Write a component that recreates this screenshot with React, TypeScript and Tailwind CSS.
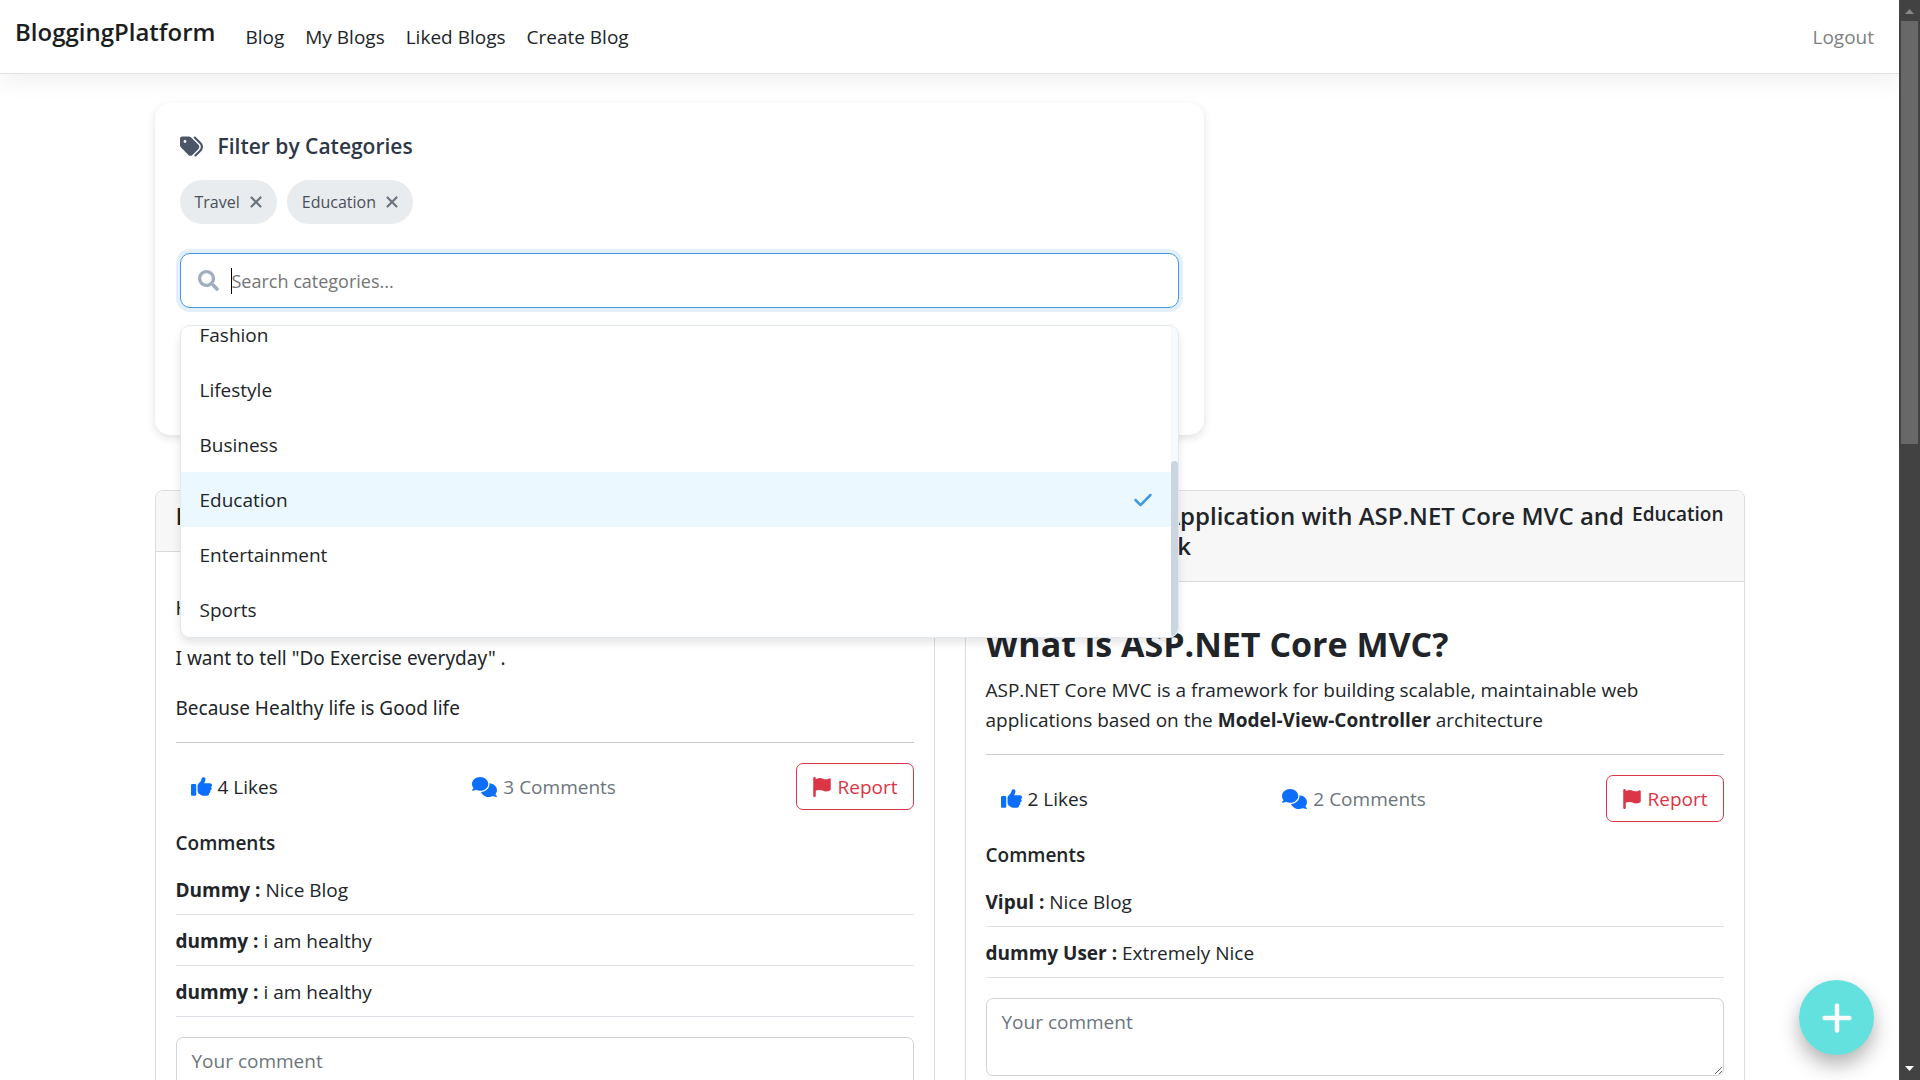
import type { ReactNode } from "react";
import { FaSearch } from "react-icons/fa";
import { FaCheck, FaComments, FaFlag, FaPlus, FaTags, FaThumbsUp, FaXmark } from "react-icons/fa6";

type Comment = { author: string; text: string };

type Post = {
  id: string;
  title: string;
  category: string;
  likes: number;
  body: ReactNode;
  comments: Comment[];
};

const NAV_LINKS = ["Blog", "My Blogs", "Liked Blogs", "Create Blog"];
const SELECTED = ["Travel", "Education"];
const CATEGORIES = ["Fashion", "Lifestyle", "Business", "Education", "Entertainment", "Sports"];

const POSTS: Post[] = [
  {
    id: "health",
    title: "Health",
    category: "Health",
    likes: 4,
    body: (
      <div className="space-y-5 font-['Noto_Sans','Open_Sans',sans-serif]">
        <p>Hello Everyone</p>
        <p>I want to tell "Do Exercise everyday" .</p>
        <p>Because Healthy life is Good life</p>
      </div>
    ),
    comments: [
      { author: "Dummy", text: "Nice Blog" },
      { author: "dummy", text: "i am healthy" },
      { author: "dummy", text: "i am healthy" },
    ],
  },
  {
    id: "mvc",
    title: "Building a Web Application with ASP.NET Core MVC and Entity Framework",
    category: "Education",
    likes: 2,
    body: (
      <div>
        <h2 className="mb-[10px] text-[34px] leading-[42px] font-bold">What is ASP.NET Core MVC?</h2>
        <p>
          ASP.NET Core MVC is a framework for building scalable, maintainable web applications based
          on the <strong className="font-bold">Model-View-Controller</strong> architecture
        </p>
      </div>
    ),
    comments: [
      { author: "Vipul", text: "Nice Blog" },
      { author: "dummy User", text: "Extremely Nice" },
    ],
  },
];

function Navbar() {
  return (
    <header className="border-b border-[#dee2e6] bg-white shadow-[0_10px_20px_rgba(0,0,0,0.05)]">
      <nav className="flex h-[73px] items-center pr-[25px] pl-[15px]">
        <a href="#home" className="mr-[30px] pb-[10px] text-[24px] leading-[38px] font-semibold text-[#1b1e21]">
          BloggingPlatform
        </a>
        <ul className="flex gap-[21px]">
          {NAV_LINKS.map((label) => (
            <li key={label}>
              <a href={"#" + label.toLowerCase().replace(" ", "-")}>{label}</a>
            </li>
          ))}
        </ul>
        <a href="#logout" className="ml-auto text-[#7f7f7f]">
          Logout
        </a>
      </nav>
    </header>
  );
}

function CategoryMenu() {
  return (
    <div className="absolute top-[72px] right-0 left-0 z-10 flex h-[313px] overflow-hidden rounded-[10px] border border-[#e2e8f0] bg-white shadow-[0_5px_8px_rgba(0,0,0,0.1)]">
      <ul role="listbox" aria-label="Categories" className="flex flex-1 flex-col justify-end overflow-hidden">
        {CATEGORIES.map((name) => {
          const checked = name === "Education";
          return (
            <li
              key={name}
              role="option"
              aria-selected={checked}
              className={
                checked
                  ? "flex h-[55px] shrink-0 items-center justify-between bg-[#ebf8ff] pr-[18px] pl-[19px]"
                  : "flex h-[55px] shrink-0 items-center justify-between pr-[18px] pl-[19px]"
              }
            >
              {name}
              {checked && <FaCheck className="h-5 w-auto text-[#4299e1]" />}
            </li>
          );
        })}
      </ul>
      <div className="flex w-[7px] flex-col justify-end bg-[#f7fafc]">
        <div className="h-[176px] rounded-full bg-[#cbd5e0]" />
      </div>
    </div>
  );
}

function CategoryFilter() {
  return (
    <section className="mt-[29px] w-[66%] rounded-[15px] bg-white px-[25px] pt-[25px] pb-[127px] shadow-[0_3px_8px_rgba(0,0,0,0.12)]">
      <h2 className="mb-4 flex items-center gap-[15px] text-[21px] leading-[36px] font-semibold text-[#2d3748]">
        <FaTags className="size-[23px] text-[#4a5568]" />
        Filter by Categories
      </h2>
      <div className="mb-[29px] flex gap-[10px]">
        {SELECTED.map((name) => (
          <span
            key={name}
            className="flex h-11 items-center gap-[9px] rounded-full bg-[#e9ecef] pr-[14px] pl-[15px] text-[16px] text-[#495057]"
          >
            {name}
            <button type="button" aria-label={"Remove " + name}>
              <FaXmark className="h-[18px] w-[14px] text-[#6c757d]" />
            </button>
          </span>
        ))}
      </div>
      <div className="relative">
        <label className="flex h-[55px] items-center gap-3 rounded-[10px] border border-[#4299e1] bg-white px-[17px] ring-4 ring-[#4299e1]/15">
          <FaSearch className="size-[21px] text-[#a0aec0]" />
          <span className="h-[26px] w-px bg-black" />
          <input
            type="text"
            aria-label="Search categories"
            placeholder="Search categories..."
            className="-ml-3 min-w-0 flex-1 text-[18px] outline-none placeholder:text-[#757575]"
          />
        </label>
        <CategoryMenu />
      </div>
    </section>
  );
}

function PostCard({ post }: { post: Post }) {
  return (
    <article className="min-w-0 rounded-[8px] border border-[#dddddd] bg-white">
      <div className="flex items-start justify-between gap-1 rounded-t-[7px] border-b border-[#d9d9d9] bg-[#f7f7f7] px-5 py-[10px]">
        <h3 className="mb-[10px] text-[24px] leading-[30px] font-semibold">{post.title}</h3>
        <span className="text-[19px] leading-[26px] font-semibold">{post.category}</span>
      </div>
      <div className="px-5 pt-[41px] pb-5">
        {post.body}
        <hr className="mt-[19px] mb-5 border-[#c8c9ca]" />
        <div className="flex h-12 items-start justify-between">
          <button type="button" className="flex h-[47px] items-center gap-[6px] px-[15px]">
            <FaThumbsUp className="size-[21px] text-[#0d6efd]" />
            {post.likes} Likes
          </button>
          <button type="button" className="flex h-[47px] items-center gap-[6px] px-[15px] text-[#6c757d]">
            <FaComments className="h-5 w-[25px] text-[#0d6efd]" />
            {post.comments.length} Comments
          </button>
          <button
            type="button"
            className="flex h-[47px] items-center gap-[6px] rounded-[7px] border border-[#dc3545] px-[15px] text-[#dc3545]"
          >
            <FaFlag className="size-5" />
            Report
          </button>
        </div>
        <h4 className="mt-5 mb-[9px] leading-6 font-semibold">Comments</h4>
        <ul>
          {post.comments.map((comment, i) => (
            <li key={i} className="border-b border-[#dee2e6] pt-[11px] pb-[9px]">
              <strong className="font-bold">{comment.author} :</strong> {comment.text}
            </li>
          ))}
        </ul>
        <textarea
          rows={2}
          aria-label="Your comment"
          placeholder="Your comment"
          className="mt-5 block w-full rounded-[7px] border border-[#ced4da] px-[15px] py-2 placeholder:text-[#6c757d]"
        />
      </div>
    </article>
  );
}

/* Page scrollbar with its two arrow buttons. */
function PageScrollbar() {
  return (
    <div className="flex w-[21px] shrink-0 flex-col items-center bg-[#424242]">
      <svg viewBox="0 0 21 21" className="w-[21px]" aria-hidden="true">
        <path d="M6 14 L10.500 9 L15 14 Z" fill="#868686" />
      </svg>
      <div className="h-[423px] w-[17px] bg-[#686868]" />
      <svg viewBox="0 0 21 21" className="mt-auto w-[21px]" aria-hidden="true">
        <path d="M6 7 L15 7 L10.500 12 Z" fill="#ffffff" />
      </svg>
    </div>
  );
}

export default function App() {
  return (
    <div className="flex h-screen overflow-hidden bg-white font-['Open_Sans','Noto_Sans',sans-serif] text-[19px] leading-[30px] text-[#212529]">
      <div className="relative min-w-0 flex-1 overflow-hidden">
        <Navbar />
        <main className="mx-auto max-w-[1650px] px-[30px]">
          <CategoryFilter />
          <div className="mt-[55px] grid grid-cols-2 items-start gap-[30px]">
            {POSTS.map((post) => (
              <PostCard key={post.id} post={post} />
            ))}
          </div>
        </main>
        <button
          type="button"
          aria-label="Create blog"
          className="absolute right-[25px] bottom-[25px] flex size-[75px] items-center justify-center rounded-full bg-[#62e1df] text-white shadow-[0_10px_20px_rgba(0,0,0,0.3)]"
        >
          <FaPlus className="size-9" />
        </button>
      </div>
      <PageScrollbar />
    </div>
  );
}
